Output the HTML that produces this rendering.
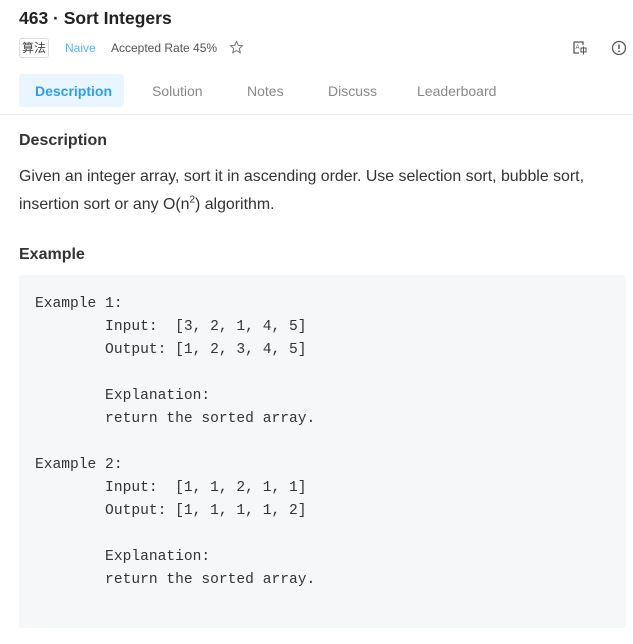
<!DOCTYPE html>
<html><head><meta charset="utf-8"><style>
body{margin:0;width:633px;height:644px;background:#fff;font-family:"Liberation Sans","Noto Sans CJK SC",sans-serif;color:#333;position:relative;overflow:hidden}
.a{position:absolute;white-space:nowrap}
pre.a{margin:0;font-family:"Liberation Mono",monospace;font-size:14.6px;line-height:23px;color:#333;white-space:pre}
</style></head><body>
<div class="a" style="left:19px;top:8px;font-size:17.5px;font-weight:600;color:#222">463 · Sort Integers</div>
<div class="a" style="left:19px;top:38px;width:28px;height:18px;border:1px solid #ddd;border-radius:3px;font-size:12px;line-height:18px;text-align:center;color:#444">算法</div>
<div class="a" style="left:65px;top:41px;font-size:12px;color:#5ab4f5">Naive</div>
<div class="a" style="left:111px;top:41px;font-size:12px;color:#555">Accepted Rate 45%</div>
<svg class="a" style="left:229px;top:40px" width="15" height="15" viewBox="0 0 16 16"><path d="M8 1.5l1.9 4.2 4.5.4-3.4 3 1 4.5L8 11.3 4 13.6l1-4.5-3.4-3 4.5-.4z" fill="none" stroke="#777" stroke-width="1.1"/></svg>
<svg class="a" style="left:572px;top:40px" width="16" height="16" viewBox="0 0 16 16"><path d="M2 2h9v3M2 2v11h5" fill="none" stroke="#555" stroke-width="1.3"/><text x="3.5" y="9" font-size="6" font-family="Liberation Sans" fill="#555">A</text><rect x="9" y="8" width="5" height="4" fill="none" stroke="#555"/><path d="M11.5 6.5v8" stroke="#555"/></svg>
<svg class="a" style="left:611px;top:40px" width="16" height="16" viewBox="0 0 16 16"><circle cx="8" cy="8" r="6.5" fill="none" stroke="#555" stroke-width="1.3"/><path d="M8 4.5v4.5" stroke="#555" stroke-width="1.5"/><circle cx="8" cy="11.3" r=".9" fill="#555"/></svg>
<div class="a" style="left:19px;top:74px;width:105px;height:33px;background:#e9f6ff;border-radius:3px"></div>
<div class="a" style="left:35px;top:83px;font-size:14px;color:#2a9ff0;font-weight:600">Description</div>
<div class="a" style="left:152px;top:83px;font-size:14px;color:#888">Solution</div>
<div class="a" style="left:247px;top:83px;font-size:14px;color:#888">Notes</div>
<div class="a" style="left:328px;top:83px;font-size:14px;color:#888">Discuss</div>
<div class="a" style="left:417px;top:83px;font-size:14px;color:#888">Leaderboard</div>
<div class="a" style="left:0;top:114px;width:633px;height:1px;background:#e8e8e8"></div>
<div class="a" style="left:19px;top:132px;font-size:16px;font-weight:600;color:#333">Description</div>
<div class="a" style="left:19px;top:163px;font-size:15.9px;line-height:28px;color:#333">Given an integer array, sort it in ascending order. Use selection sort, bubble sort,<br>insertion sort or any O(n<sup style="font-size:10px;line-height:0">2</sup>) algorithm.</div>
<div class="a" style="left:19px;top:246px;font-size:16px;font-weight:600;color:#333">Example</div>
<div class="a" style="left:19px;top:275px;width:607px;height:353px;background:#f6f7f9;border-radius:3px"></div>
<pre class="a" style="left:35px;top:293px">Example 1:
        Input:  [3, 2, 1, 4, 5]
        Output: [1, 2, 3, 4, 5]

        Explanation:
        return the sorted array.

Example 2:
        Input:  [1, 1, 2, 1, 1]
        Output: [1, 1, 1, 1, 2]

        Explanation:
        return the sorted array.</pre>
</body></html>
